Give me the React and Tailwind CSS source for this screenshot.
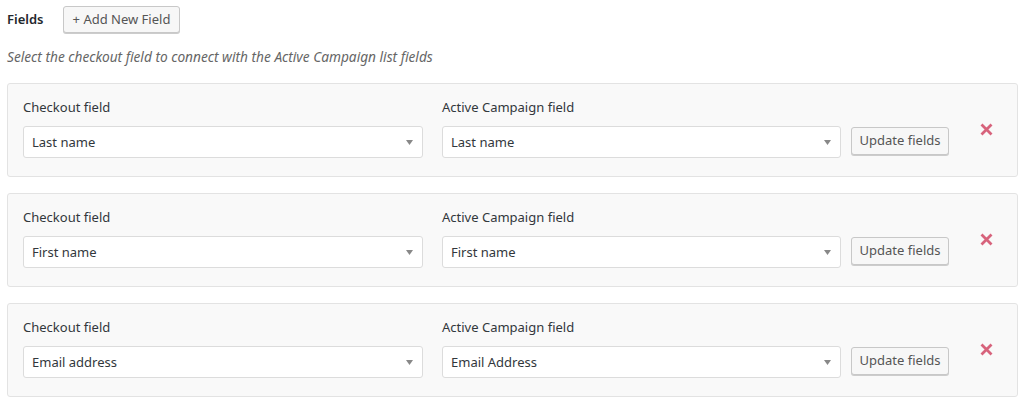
import { useState } from 'react'

const rows = [
  { checkout: 'Last name', campaign: 'Last name' },
  { checkout: 'First name', campaign: 'First name' },
  { checkout: 'Email address', campaign: 'Email Address' },
]

function Caret() {
  return (
    <svg width="7" height="5" viewBox="0 0 7 5" className="shrink-0">
      <path d="M0 0 L7 0 L3.5 5 Z" fill="#888" />
    </svg>
  )
}

function FakeSelect({ value, width }) {
  return (
    <div
      className={`${width} h-[32px] bg-white border border-[#dcdcdc] rounded-[3px] flex items-center justify-between pl-[8px] pr-[9px] text-[13px] text-[#32373c]`}
    >
      <span className="pt-[2px]">{value}</span>
      <Caret />
    </div>
  )
}

function RemoveIcon() {
  return (
    <svg width="13" height="13" viewBox="0 0 13 13">
      <path d="M1.5 1.5 L11.5 11.5 M11.5 1.5 L1.5 11.5" stroke="#d7637c" strokeWidth="2.8" />
    </svg>
  )
}

function FieldRow({ row }) {
  return (
    <div className="bg-[#f9f9f9] border border-[#e3e3e3] rounded-[3px] pl-[15px] pt-[13px] pb-[18px] flex items-start">
      <div className="w-[400px]">
        <div className="text-[13px] leading-[20px] text-[#32373c] mb-[9px]">Checkout field</div>
        <FakeSelect value={row.checkout} width="w-[400px]" />
      </div>
      <div className="w-[399px] ml-[19px]">
        <div className="text-[13px] leading-[20px] text-[#32373c] mb-[9px]">Active Campaign field</div>
        <FakeSelect value={row.campaign} width="w-[399px]" />
      </div>
      <button className="ml-[10px] mt-[30px] w-[98px] h-[28px] bg-[#f7f7f7] border border-[#c8c8c8] rounded-[3px] shadow-[0_1px_0_#ccc] text-[13px] text-[#555] flex items-center justify-center">
        Update fields
      </button>
      <button className="ml-[31px] mt-[26px]">
        <RemoveIcon />
      </button>
    </div>
  )
}

export default function App() {
  const [items] = useState(rows)
  return (
    <div
      className="w-[1029px] h-[405px] bg-white pl-[7px] pr-[11px] pt-[6px] overflow-hidden"
      style={{ fontFamily: '"Noto Sans", "Open Sans", sans-serif' }}
    >
      <div className="flex items-center">
        <h3 className="text-[13px] font-semibold text-[#23282d] w-[56px]">Fields</h3>
        <button className="h-[27px] w-[117px] bg-[#f7f7f7] border border-[#c8c8c8] rounded-[3px] shadow-[0_1px_0_#ccc] text-[13px] text-[#555] flex items-center justify-center">
          + Add New Field
        </button>
      </div>
      <p className="mt-[14px] text-[13.7px] italic text-[#666] leading-[20px]">
        Select the checkout field to connect with the Active Campaign list fields
      </p>
      <div className="mt-[16px] flex flex-col gap-[16px]">
        {items.map((row, i) => (
          <FieldRow key={i} row={row} />
        ))}
      </div>
    </div>
  )
}
